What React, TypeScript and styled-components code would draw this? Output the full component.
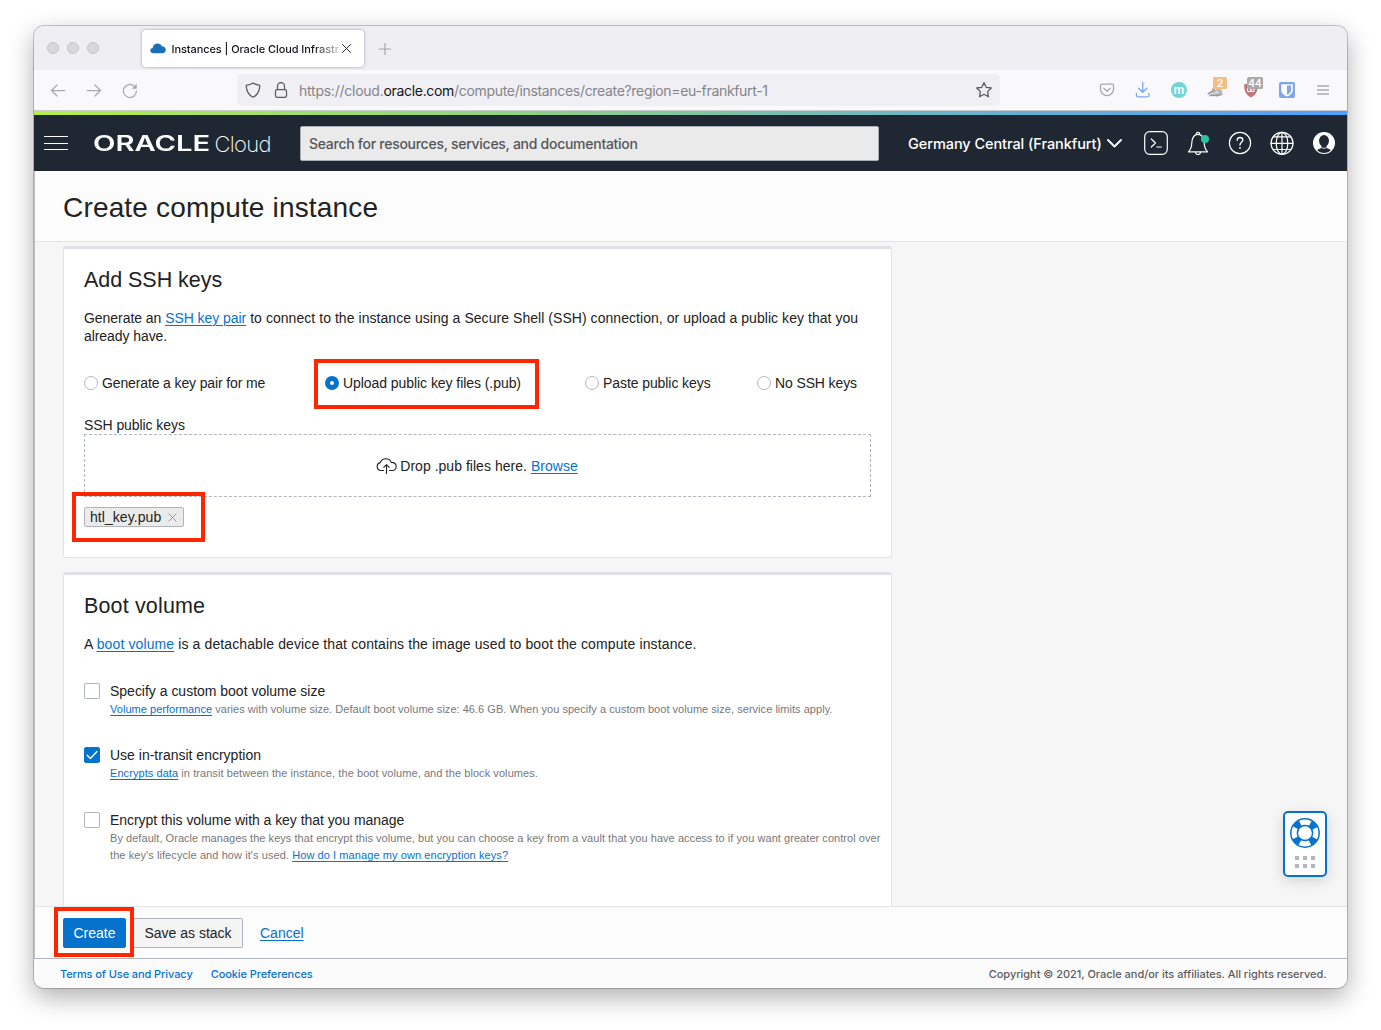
import React from "react";
import styled, { createGlobalStyle } from "styled-components";

const helv = `"Liberation Sans", Arial, sans-serif`;
const sf = `Inter, "Liberation Sans", sans-serif`;

const Global = createGlobalStyle`
  *, *::before, *::after { box-sizing: border-box; }
  html, body { margin: 0; padding: 0; background: #fff; }
  body { overflow: hidden; font-family: ${helv}; font-size: 14px; color: #222; }
`;

const Desktop = styled.div`
  width: 1381px;
  height: 1030px;
  padding: 26px 34px 42px;
  display: flex;
`;

const Window = styled.div`
  flex: 1;
  min-width: 0;
  height: 962px;
  display: flex;
  flex-direction: column;
  border-radius: 10px;
  overflow: hidden;
  background: #fbfbfb;
  box-shadow: 0 0 0 1px rgba(0, 0, 0, 0.2), 0 9px 26px rgba(0, 0, 0, 0.32);
`;

const T = styled.span<{ $ls?: number }>`
  white-space: nowrap;
  letter-spacing: ${(p) => p.$ls ?? 0}px;
`;

/* Browser chrome */

const TabStrip = styled.div`
  height: 44px;
  flex: none;
  background: #efeef3;
  display: flex;
  align-items: center;
  padding-left: 13px;
`;

const Lights = styled.div`
  display: flex;
  gap: 8px;
  width: 94.500px;
`;

const Light = styled.span`
  width: 12px;
  height: 12px;
  border-radius: 50%;
  background: #d9d9da;
  border: 1px solid #c4c3c6;
`;

const Tab = styled.div`
  width: 222px;
  height: 37px;
  padding: 0 10px 0 8.500px;
  border-radius: 4px;
  background: #fff;
  box-shadow: 0 0 3px rgba(90, 90, 125, 0.6);
  display: flex;
  align-items: center;
  font: 400 11px/16px ${sf};
  color: #15141a;
`;

const TabTitle = styled.div`
  width: 169px;
  padding-top: 1px;
  margin-left: 5.5px;
  margin-right: 1.500px;
  white-space: nowrap;
  font-weight: 450;
  mask-image: linear-gradient(to right, #000 84%, rgba(0, 0, 0, 0.15) 100%);
`;

const NewTab = styled.div`
  margin-left: 15px;
  margin-top: 1px;
  display: flex;
`;

const Toolbar = styled.div`
  height: 41px;
  flex: none;
  background: #f9f9fb;
  border-bottom: 1px solid #cccccf;
  display: flex;
  align-items: center;
  padding: 0 6px;
`;

const ToolCell = styled.div`
  width: 36px;
  height: 36px;
  display: flex;
  align-items: center;
  justify-content: center;
  position: relative;
  color: #a9a8ad;
`;

const UrlBar = styled.div`
  width: 763px;
  height: 32px;
  margin-left: 89px;
  margin-right: auto;
  background: #f0eff4;
  border-radius: 4px;
  padding: 0 7px 0 8px;
  display: flex;
  align-items: center;
  color: #5b5b66;
  font: 400 14px/18px ${sf};
`;

const UrlText = styled.div`
  flex: 1;
  padding-top: 1px;
  margin-left: 10px;
  color: #85848a;
  white-space: nowrap;
  letter-spacing: -0.32px;
  b { font-weight: 400; color: #15141a; }
`;

const UrlScheme = styled.span`
  letter-spacing: -0.24px;
`;

const IconGap = styled.span`
  width: 12px;
`;

const Badge = styled.span<{ $bg: string; $w: number; $left: number }>`
  position: absolute;
  top: 5px;
  left: ${(p) => p.$left}px;
  width: ${(p) => p.$w}px;
  height: 12px;
  border-radius: 1.5px;
  background: ${(p) => p.$bg};
  color: #fff;
  font: 600 10px/13px ${sf};
  text-align: center;
`;

const RoundLogo = styled.span`
  width: 16px;
  height: 16px;
  border-radius: 50%;
  background: #73d4d4;
  color: #fff;
  font: 600 12px/15px ${sf};
  text-align: center;
`;

/* Console header */

const Stripe = styled.div`
  height: 4px;
  flex: none;
  background: linear-gradient(to right, #b5ee4c 0%, #8fd086 38%, #6cb5c6 68%, #509fff 100%);
`;

const Header = styled.header`
  height: 56px;
  flex: none;
  background: #1e2732;
  color: #fff;
  display: flex;
  align-items: center;
  padding-left: 10px;
`;

const Burger = styled.div`
  width: 24px;
  height: 14px;
  display: flex;
  flex-direction: column;
  justify-content: space-between;
  margin-right: 25px;
  i { height: 1px; background: #fff; }
`;

const Brand = styled.div`
  width: 207px;
  display: flex;
  align-items: center;
`;

const BrandMark = styled.div`
  width: 121.500px;
  padding-top: 1px;
  font: 600 21px/24px ${sf};
  white-space: nowrap;
  span { display: inline-block; transform: scaleX(1.39); transform-origin: 0 50%; }
`;

const BrandSub = styled.div`
  padding-top: 1px;
  font: 250 22px/24px ${sf};
  letter-spacing: -0.7px;
`;

const Search = styled.div`
  width: 579px;
  height: 35px;
  border: 1px solid #a9aeb6;
  border-radius: 2px;
  background: #eaeaea;
  color: #55565a;
  padding: 0 8px;
  font: 450 14px/34px ${sf};
`;

const Region = styled.div`
  width: 227px;
  margin-left: 29px;
  display: flex;
  align-items: center;
  gap: 5px;
  padding-top: 1px;
  font: 500 14.5px/18px ${sf};
`;

const HeaderIcon = styled.div`
  width: 42px;
  display: flex;
  justify-content: center;
`;

/* Page */

const Page = styled.div`
  flex: 1;
  min-height: 0;
  display: flex;
  flex-direction: column;
  border-left: 1px solid #bfc0c4;
`;

const TitleBar = styled.div`
  height: 71px;
  flex: none;
  background: #fcfcfc;
  border-bottom: 1px solid #e4e4e6;
  padding: 0 28px;
  display: flex;
  align-items: center;
`;

const H1 = styled.h1`
  margin: 3px 0 0;
  font: 400 28px/34px ${helv};
  letter-spacing: 0.17px;
  color: #222;
`;

const Content = styled.main`
  position: relative;
  flex: 1;
  min-height: 0;
  overflow: hidden;
  background: #f6f6f6;
  padding: 4px 0 0 28px;
  display: flex;
  flex-direction: column;
  gap: 14px;
`;

const Card = styled.section<{ $h: number }>`
  width: 829px;
  height: ${(p) => p.$h}px;
  flex: none;
  background: #fff;
  border: 1px solid #e1e3e6;
  border-top: 3px solid #e0e2e6;
  border-radius: 3px;
  padding: 18px 0 0 20px;
`;

const H2 = styled.h2`
  margin: 0;
  font: 400 21.5px/26px ${helv};
  color: #222;
`;

const Para = styled.p`
  margin: 16px 0 0;
  font-size: 14px;
  line-height: 18px;
  color: #222;
`;

const Link = styled.a`
  color: #0572ce;
  text-decoration: underline;
  text-underline-offset: 2px;
  text-decoration-thickness: 1px;
`;

const Radios = styled.div`
  display: grid;
  grid-template-columns: 241px 260px 172px auto;
  margin-top: 28px;
`;

const RadioItem = styled.label`
  position: relative;
  display: flex;
  align-items: center;
  gap: 4px;
  height: 20px;
`;

const Dot = styled.span<{ $on?: boolean }>`
  width: 14px;
  height: 14px;
  border-radius: 50%;
  background: #fff;
  border: ${(p) => (p.$on ? "5px solid #0572ce" : "1px solid #b4b9c0")};
`;

const Callout = styled.span<{ $x: number; $y: number; $w: number }>`
  position: absolute;
  left: ${(p) => p.$x}px;
  top: ${(p) => p.$y}px;
  width: ${(p) => p.$w}px;
  height: 50px;
  border: 4px solid #ff2600;
  pointer-events: none;
`;

const FieldLabel = styled.div`
  margin-top: 23px;
  height: 18px;
  line-height: 18px;
`;

const DropZone = styled.div`
  width: 787px;
  height: 63px;
  border: 1px dashed #b2b6bd;
  display: flex;
  align-items: center;
  justify-content: center;
  gap: 3px;
  padding-right: 1px;
`;

const Chip = styled.div`
  position: relative;
  width: 100px;
  height: 20px;
  margin-top: 10px;
  border: 1px solid #b0b5bb;
  border-radius: 2px;
  background: #ebebeb;
  display: flex;
  align-items: center;
  justify-content: space-between;
  padding: 0 6.500px 0 5px;
`;

const Option = styled.div<{ $top: number }>`
  display: grid;
  grid-template-columns: 26px auto;
  margin-top: ${(p) => p.$top}px;
`;

const Box = styled.span<{ $on?: boolean }>`
  width: 16px;
  height: 16px;
  border-radius: 2px;
  border: 1px solid ${(p) => (p.$on ? "#0572ce" : "#b0b5bb")};
  background: ${(p) => (p.$on ? "#0572ce" : "#fff")};
  display: flex;
  align-items: center;
  justify-content: center;
`;

const OptionLabel = styled.div`
  height: 18px;
  font-size: 14px;
  line-height: 16px;
`;

const Help = styled.div`
  font-size: 11px;
  line-height: 17px;
  color: #77787b;
`;

const Widget = styled.div`
  position: absolute;
  right: 20px;
  top: 569px;
  width: 44px;
  height: 66px;
  border: 2px solid #0572ce;
  border-radius: 5px;
  background: #fff;
  box-shadow: 0 4px 14px rgba(0, 0, 0, 0.14);
  display: flex;
  flex-direction: column;
  align-items: center;
  padding-top: 5px;
  gap: 8px;
`;

const Grip = styled.div`
  display: grid;
  grid-template-columns: repeat(3, 4px);
  gap: 4px;
  i { width: 4px; height: 4px; background: #b2b6bd; }
`;

const Actions = styled.div`
  height: 52px;
  flex: none;
  border-top: 1px solid #e4e4e6;
  background: #fcfcfc;
  display: flex;
  align-items: center;
  padding: 1px 0 0 28px;
`;

const Button = styled.button<{ $primary?: boolean; $w: number }>`
  position: relative;
  width: ${(p) => p.$w}px;
  height: 30px;
  padding: 0;
  margin-right: ${(p) => (p.$primary ? 7 : 17)}px;
  border: 1px solid ${(p) => (p.$primary ? "#0572ce" : "#b0b5bb")};
  border-radius: 2px;
  background: ${(p) => (p.$primary ? "#0572ce" : "#f4f4f4")};
  color: ${(p) => (p.$primary ? "#fff" : "#222")};
  font: 400 14px/18px ${helv};
  z-index: ${(p) => (p.$primary ? 1 : 0)};
`;

const Footer = styled.footer`
  height: 30px;
  flex: none;
  border-top: 1px solid #b2b6bd;
  background: #fbfbfb;
  display: flex;
  align-items: center;
  padding: 0 20.5px 0 26px;
  gap: 18px;
  font: 500 11px/14px ${sf};
  color: #0572ce;
`;

const Copyright = styled.span`
  margin-left: auto;
  color: #5b5c5f;
`;

const Svg = ({ w, h = w, vb, children }: { w: number; h?: number; vb?: string; children: React.ReactNode }) => (
  <svg width={w} height={h} viewBox={vb ?? `0 0 ${w} ${h}`} fill="none" stroke="currentColor" strokeLinecap="round" strokeLinejoin="round" style={{ flex: "none", display: "block" }}>
    {children}
  </svg>
);

export default function App() {
  return (
    <>
      <Global />
      <Desktop>
        <Window>
          <TabStrip>
            <Lights><Light /><Light /><Light /></Lights>
            <Tab>
              <Svg w={16} h={11}>
                <path d="M3.6 10.2C1.6 10.2.2 9.2.2 7.6c0-1.5 1.1-2.5 2.5-2.7C3 2.300 5 .5 7.500.5c2 0 3.600 1.100 4.300 2.700 2.300.1 4 1.600 4 3.600 0 2-1.500 3.400-3.500 3.400z" fill="#1b70b9" stroke="none" />
              </Svg>
              <TabTitle><T $ls={-0.08}>Instances | Oracle Cloud Infrastr</T></TabTitle>
              <Svg w={9}><path d="M.5.500l8 8M8.500.5l-8 8" stroke="#2b2a33" /></Svg>
            </Tab>
            <NewTab><Svg w={12}><path d="M6 .5v11M.5 6h11" stroke="#a5a4aa" strokeWidth="1.200" /></Svg></NewTab>
          </TabStrip>

          <Toolbar>
            <ToolCell><Svg w={16} h={13}><path d="M14.700 6.500H1.500M7 1L1.500 6.500 7 12" strokeWidth="1.250" /></Svg></ToolCell>
            <ToolCell><Svg w={16} h={13}><path d="M1.300 6.500h13.200M9 1l5.500 5.500L9 12" strokeWidth="1.250" /></Svg></ToolCell>
            <ToolCell>
              <Svg w={16} h={15} vb="-0.7 0 16 15">
                <path d="M13.700 8.200A6.500 6.500 0 1 1 11.800 3.400L13 4.600" strokeWidth="1.250" />
                <path d="M14 .8v5H9z" fill="currentColor" stroke="none" />
              </Svg>
            </ToolCell>
            <UrlBar>
              <Svg w={16}><path d="M8 .9C6.300 2.200 4 2.900 1.800 3.100c-.4 0-.7.4-.6.8C1.500 9 3.800 13.300 8 15.200c4.200-1.900 6.500-6.200 6.800-11.300 0-.4-.2-.8-.6-.8C12 2.900 9.700 2.200 8 .9z" strokeWidth="1.250" /></Svg>
              <IconGap />
              <Svg w={16}>
                <rect x="2.500" y="7.500" width="11" height="7.800" rx="1.600" strokeWidth="1.250" />
                <path d="M4.500 7.300V4.100a3.500 3.500 0 0 1 7 0v3.200" strokeWidth="1.250" />
              </Svg>
              <UrlText><UrlScheme>https://cloud.</UrlScheme><b>oracle.com</b>/compute/instances/create?region=eu-frankfurt-1</UrlText>
              <Svg w={18}><path d="M9 1.600l2.200 4.700 5.100.7-3.700 3.600.9 5.200L9 13.300l-4.500 2.500.9-5.200L1.700 7l5.100-.7z" strokeWidth="1.300" /></Svg>
            </UrlBar>
            <ToolCell>
              <Svg w={16} h={14} vb="-0.5 0 16 14">
                <path d="M2.400 1.200h10.200c.8 0 1.400.6 1.400 1.300v3.700a6.500 6.500 0 0 1-13 0V2.500c0-.7.6-1.300 1.400-1.300z" strokeWidth="1.300" />
                <path d="M4.300 5.200l3.200 3.100 3.200-3.100" strokeWidth="1.300" />
              </Svg>
            </ToolCell>
            <ToolCell>
              <Svg w={16} h={16}>
                <path d="M7.700.6v9.400M3.600 6.200L7.700 10.300l4.100-4.100M1.400 11.500v1.800c0 .8.600 1.500 1.500 1.500h9.600c.9 0 1.500-.7 1.500-1.500v-1.800" stroke="#78a8ef" strokeWidth="1.300" />
              </Svg>
            </ToolCell>
            <ToolCell><RoundLogo>m</RoundLogo></ToolCell>
            <ToolCell>
              <Svg w={16} h={16}>
                <path d="M.5 11.500L6 7.200 8.500 1.500 15 8.500 15.500 12.500 9.500 14.500 2.500 13.800z" fill="#b9b8b7" stroke="none" />
                <path d="M1 11.500l7-3.500M3 13.800l9-.8M5.500 7.500L8 3M10 14l5-1.500" stroke="#92918e" strokeWidth=".9" />
                <path d="M3.500 12l8-2M8 7l3 5" stroke="#e9e9e9" strokeWidth=".8" />
              </Svg>
              <Badge $bg="#f2be84" $w={14} $left={16}>2</Badge>
            </ToolCell>
            <ToolCell>
              <Svg w={16}>
                <path d="M1.200 2.200C3.700 2.200 6 1.700 8 .5c2 1.200 4.300 1.700 6.800 1.700 0 6-1 10-6.800 13.300C2.200 12.200 1.200 8.200 1.200 2.200z" fill="#c07479" stroke="none" />
                <path d="M4.500 6.500v1.700c0 2 3.200 2 3.200 0V6.500M7.700 8.200c0 2 3.400 2 3.400-.2 0-2.200-3-2.200-3 0" stroke="#fff" strokeWidth="1.200" />
              </Svg>
              <Badge $bg="#aaaaab" $w={16} $left={14}>44</Badge>
            </ToolCell>
            <ToolCell>
              <Svg w={16}>
                <rect width="16" height="16" rx="2" fill="#80a5ea" stroke="none" />
                <path d="M2.200 2.200h11.600v6c0 2.900-3 5-5.800 6.200-2.800-1.200-5.800-3.300-5.800-6.200z" fill="#fff" stroke="none" />
                <path d="M8 3.500h4v4.900c0 1.700-1.800 3.300-4 4.400z" fill="#80a5ea" stroke="none" />
              </Svg>
            </ToolCell>
            <ToolCell><Svg w={12} h={10}><path d="M.5 1h11M.5 5h11M.5 9h11" strokeWidth="1.300" /></Svg></ToolCell>
          </Toolbar>

          <Stripe />
          <Header>
            <Burger><i /><i /><i /></Burger>
            <Brand>
              <BrandMark><span>ORACLE</span></BrandMark>
              <BrandSub>Cloud</BrandSub>
            </Brand>
            <Search><T $ls={-0.27}>Search for resources, services, and documentation</T></Search>
            <Region>
              <T $ls={-0.07}>Germany Central (Frankfurt)</T>
              <Svg w={15} h={9}><path d="M1 1l6.500 6.500L14 1" strokeWidth="1.900" /></Svg>
            </Region>
            <HeaderIcon>
              <Svg w={24}>
                <rect x=".7" y=".7" width="22.600" height="22.600" rx="5" strokeWidth="1.200" />
                <path d="M7.300 8l4.200 4-4.200 4M12.800 16h4.500" strokeWidth="1.200" />
              </Svg>
            </HeaderIcon>
            <HeaderIcon>
              <Svg w={24}>
                <path d="M2.500 20.800h19c-2.300-2.200-3.100-4.800-3.300-8.800-.3-5-2.300-8.600-6.200-8.600S6.100 7 5.800 12c-.2 4-1 6.600-3.300 8.800zM10.500 3.400a1.600 1.600 0 1 1 3 0M9.500 21a2.500 2.500 0 0 0 5 0" strokeWidth="1.200" />
                <circle cx="19" cy="8" r="4" fill="#2fc4a0" stroke="none" />
              </Svg>
            </HeaderIcon>
            <HeaderIcon>
              <Svg w={24}>
                <circle cx="12" cy="12" r="10.600" strokeWidth="1.200" />
                <path d="M9.200 9.300c0-1.700 1.200-2.800 2.800-2.800s2.800 1 2.800 2.600c0 2.200-2.800 2.300-2.800 4.900" strokeWidth="1.400" />
                <circle cx="12" cy="16.900" r=".9" fill="currentColor" stroke="none" />
              </Svg>
            </HeaderIcon>
            <HeaderIcon>
              <Svg w={24}>
                <circle cx="12" cy="12.300" r="11" strokeWidth="1.200" />
                <ellipse cx="12" cy="12.300" rx="5.800" ry="11" strokeWidth="1.200" />
                <path d="M1 12.300h22M12 1.300v22M3.500 5.800h17M3.500 18.500h17" strokeWidth="1.200" />
              </Svg>
            </HeaderIcon>
            <HeaderIcon>
              <Svg w={24}>
                <circle cx="12" cy="12" r="11" fill="#fff" stroke="none" />
                <ellipse cx="12" cy="9.800" rx="5" ry="5.800" fill="#1e2732" stroke="none" />
                <path d="M5.200 19.300c1.500-1.500 3.200-1.500 4.700-2.500h4.200c1.500 1 3.200 1 4.700 2.500-3.800 3.700-9.800 3.700-13.600 0z" fill="#1e2732" stroke="none" />
                <path d="M9.500 14h5v4h-5z" fill="#1e2732" stroke="none" />
                <path d="M9.800 16.800c1.500.8 2.900.8 4.400 0" stroke="#fff" strokeWidth=".8" />
              </Svg>
            </HeaderIcon>
          </Header>

          <Page>
            <TitleBar><H1>Create compute instance</H1></TitleBar>
            <Content>
              <Card $h={312}>
                <H2><T $ls={-0.04}>Add SSH keys</T></H2>
                <Para>
                  <T $ls={-0.05}>Generate an <Link>SSH key pair</Link></T>
                  <T $ls={0.05}> to connect to the instance using a Secure Shell (SSH) connection, or upload a public key that you</T>
                  <br />
                  <T $ls={-0.07}>already have.</T>
                </Para>
                <Radios>
                  <RadioItem><Dot /><T $ls={-0.13}>Generate a key pair for me</T></RadioItem>
                  <RadioItem><Dot $on /><T $ls={-0.06}>Upload public key files (.pub)</T><Callout $x={-11} $y={-14} $w={225} /></RadioItem>
                  <RadioItem><Dot /><T $ls={-0.08}>Paste public keys</T></RadioItem>
                  <RadioItem><Dot /><T $ls={-0.12}>No SSH keys</T></RadioItem>
                </Radios>
                <FieldLabel><T $ls={-0.07}>SSH public keys</T></FieldLabel>
                <DropZone>
                  <Svg w={21} h={16}>
                    <path d="M7.500 12.500H5a4 4 0 0 1-.7-7.900C5.200 2.300 7.200.8 9.800.8c2.700 0 4.700 1.500 5.400 3.600 3 0 5 1.800 5 4.200 0 2.300-1.700 3.900-4 3.900h-2.700M10.500 15.500V6.800M7.800 9.300l2.700-2.700 2.700 2.700" stroke="#222" strokeWidth="1.100" />
                  </Svg>
                  <T $ls={0.03}>Drop .pub files here. <Link>Browse</Link></T>
                </DropZone>
                <Chip>
                  <T $ls={0.06}>htl_key.pub</T>
                  <Svg w={9}><path d="M.8.8l7.400 7.400M8.200.8L.8 8.200" stroke="#8a8d92" strokeWidth=".9" /></Svg>
                  <Callout $x={-13} $y={-16} $w={133} />
                </Chip>
              </Card>

              <Card $h={400}>
                <H2><T $ls={0.15}>Boot volume</T></H2>
                <Para><T $ls={0.115}>A <Link>boot volume</Link> is a detachable device that contains the image used to boot the compute instance.</T></Para>
                <Option $top={30}>
                  <Box />
                  <div>
                    <OptionLabel><T $ls={-0.01}>Specify a custom boot volume size</T></OptionLabel>
                    <Help><T $ls={0.034}><Link>Volume performance</Link> varies with volume size. Default boot volume size: 46.6 GB. When you specify a custom boot volume size, service limits apply.</T></Help>
                  </div>
                </Option>
                <Option $top={29}>
                  <Box $on><Svg w={12} h={10}><path d="M1.200 5.300L4.400 8.400 11 1.400" stroke="#fff" strokeWidth="1.400" /></Svg></Box>
                  <div>
                    <OptionLabel><T>Use in-transit encryption</T></OptionLabel>
                    <Help><T $ls={0.07}><Link>Encrypts data</Link> in transit between the instance, the boot volume, and the block volumes.</T></Help>
                  </div>
                </Option>
                <Option $top={30}>
                  <Box />
                  <div>
                    <OptionLabel><T $ls={-0.05}>Encrypt this volume with a key that you manage</T></OptionLabel>
                    <Help>
                      <T $ls={0.047}>By default, Oracle manages the keys that encrypt this volume, but you can choose a key from a vault that you have access to if you want greater control over</T>
                      <br />
                      <T $ls={0.08}>the key's lifecycle and how it's used. <Link>How do I manage my own encryption keys?</Link></T>
                    </Help>
                  </div>
                </Option>
              </Card>

              <Widget>
                <Svg w={30}>
                  <circle cx="15" cy="15" r="10.800" stroke="#fff" strokeWidth="6.400" />
                  <circle cx="15" cy="15" r="10.800" stroke="#0572ce" strokeWidth="6.400" strokeLinecap="butt" strokeDasharray="6.600 10.365" strokeDashoffset="-5.180" />
                  <circle cx="15" cy="15" r="14.200" stroke="#0572ce" strokeWidth="1.500" />
                  <circle cx="15" cy="15" r="7.600" fill="#fff" stroke="#0572ce" strokeWidth="1.500" />
                </Svg>
                <Grip><i /><i /><i /><i /><i /><i /></Grip>
              </Widget>
            </Content>
            <Actions>
              <Button $primary $w={63}><T>Create</T><Callout $x={-10} $y={-12} $w={80} /></Button>
              <Button $w={110}><T>Save as stack</T></Button>
              <Link><T>Cancel</T></Link>
            </Actions>
          </Page>
          <Footer>
            <T $ls={-0.09}>Terms of Use and Privacy</T>
            <T $ls={-0.08}>Cookie Preferences</T>
            <Copyright><T $ls={-0.03}>Copyright © 2021, Oracle and/or its affiliates. All rights reserved.</T></Copyright>
          </Footer>
        </Window>
      </Desktop>
    </>
  );
}
